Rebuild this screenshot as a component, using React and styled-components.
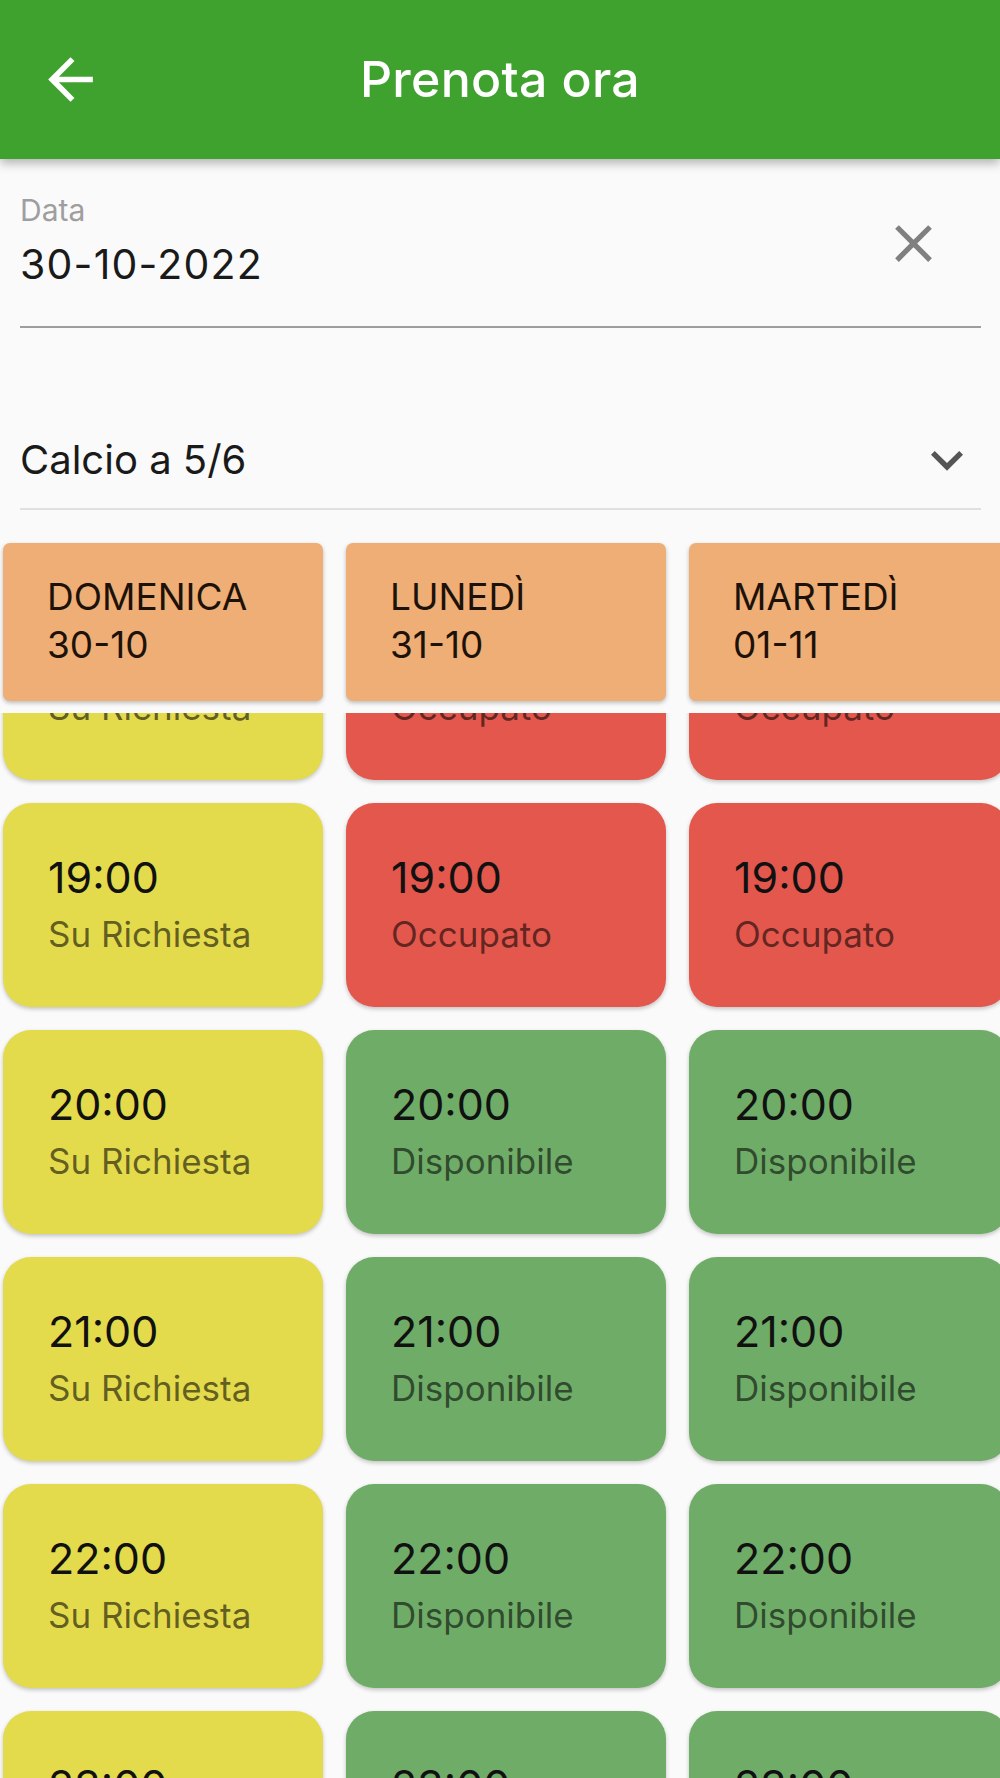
import styled, { createGlobalStyle } from "styled-components";

const days = [
  { name: "DOMENICA", date: "30-10" },
  { name: "LUNEDÌ", date: "31-10" },
  { name: "MARTEDÌ", date: "01-11" },
];

// status per column (domenica, lunedì, martedì)
const slots = [
  { time: "18:00", status: ["request", "busy", "busy"] },
  { time: "19:00", status: ["request", "busy", "busy"] },
  { time: "20:00", status: ["request", "free", "free"] },
  { time: "21:00", status: ["request", "free", "free"] },
  { time: "22:00", status: ["request", "free", "free"] },
  { time: "23:00", status: ["request", "free", "free"] },
];

const statusLabel = {
  request: "Su Richiesta",
  busy: "Occupato",
  free: "Disponibile",
};

const statusColor = {
  request: "#e3da4c",
  busy: "#e3574d",
  free: "#6fac68",
};

const App = () => {
  return (
    <>
      <GlobalStyle />
      <Page>
        <AppBar>
          <BackButton aria-label="indietro">
            <svg width="67" height="67" viewBox="0 0 24 24" fill="#fff">
              <path d="M20 11H7.83l5.59-5.59L12 4l-8 8 8 8 1.41-1.41L7.83 13H20v-2z" />
            </svg>
          </BackButton>
          <Title>Prenota ora</Title>
        </AppBar>

        <DateField>
          <FieldText>
            <FieldLabel>Data</FieldLabel>
            <FieldValue>30-10-2022</FieldValue>
          </FieldText>
          <ClearButton aria-label="cancella">
            <svg width="63" height="63" viewBox="0 0 24 24" fill="#808080">
              <path d="M19 6.41L17.59 5 12 10.59 6.41 5 5 6.41 10.59 12 5 17.59 6.41 19 12 13.41 17.59 19 19 17.59 13.41 12z" />
            </svg>
          </ClearButton>
        </DateField>

        <SportSelect>
          <SelectValue>Calcio a 5/6</SelectValue>
          <svg width="64" height="64" viewBox="0 0 24 24" fill="#555">
            <path d="M16.59 8.59L12 13.17 7.41 8.59 6 10l6 6 6-6z" />
          </svg>
        </SportSelect>

        <DayRow>
          {days.map((d) => (
            <DayCard key={d.name}>
              <div>{d.name}</div>
              <div>{d.date}</div>
            </DayCard>
          ))}
        </DayRow>

        <SlotViewport>
          <SlotGrid>
            {slots.map((row) =>
              row.status.map((s, i) => (
                <SlotCard key={row.time + i} $status={s}>
                  <SlotTime>{row.time}</SlotTime>
                  <SlotStatus>{statusLabel[s]}</SlotStatus>
                </SlotCard>
              ))
            )}
          </SlotGrid>
        </SlotViewport>
      </Page>
    </>
  );
};

export default App;

//Styled components
const GlobalStyle = createGlobalStyle`
  html, body {
    margin: 0;
    padding: 0;
    overflow: hidden;
    background: #fafafa;
  }
  body {
    font-family: Inter, "Noto Sans", sans-serif;
  }
`;

const Page = styled.div`
  height: 100vh;
  display: flex;
  flex-direction: column;
  overflow: hidden;
  background: #fafafa;
`;

const AppBar = styled.header`
  position: relative;
  z-index: 2;
  flex-shrink: 0;
  height: 159px;
  background: #40a22e;
  box-shadow: 0 4px 10px rgba(0, 0, 0, 0.3);
  display: grid;
  grid-template-columns: 1fr auto 1fr;
  align-items: center;
`;

const BackButton = styled.div`
  justify-self: start;
  margin-left: 37px;
  display: flex;
`;

const Title = styled.h1`
  margin: 0 0 2px;
  font-size: 50px;
  font-weight: 500;
  color: #fff;
  letter-spacing: 0.3px;
`;

const DateField = styled.div`
  flex-shrink: 0;
  margin: 37px 19px 0 20px;
  padding-bottom: 41px;
  border-bottom: 2px solid #9e9e9e;
  display: flex;
  align-items: center;
  justify-content: space-between;
`;

const FieldText = styled.div`
  display: flex;
  flex-direction: column;
`;

const FieldLabel = styled.div`
  font-size: 30px;
  line-height: 29px;
  color: #9e9e9e;
`;

const FieldValue = styled.div`
  margin-top: 19px;
  font-size: 41px;
  line-height: 41px;
  letter-spacing: 1.2px;
  color: #1a1a1a;
`;

const ClearButton = styled.div`
  display: flex;
  margin: 6px 36px 0 0;
`;

const SportSelect = styled.div`
  flex-shrink: 0;
  margin: 112px 19px 0 20px;
  height: 40px;
  padding-bottom: 28px;
  border-bottom: 2px solid #e0e0e0;
  display: flex;
  align-items: center;
  justify-content: space-between;

  svg {
    margin-right: 2px;
  }
`;

const SelectValue = styled.div`
  font-size: 40px;
  line-height: 40px;
  color: #1a1a1a;
`;

const DayRow = styled.div`
  flex-shrink: 0;
  margin-top: 33px;
  padding-left: 3px;
  display: grid;
  grid-template-columns: repeat(3, 320px);
  column-gap: 23px;
`;

const DayCard = styled.div`
  box-sizing: border-box;
  height: 158px;
  padding: 30px 0 0 44px;
  background: #eeae76;
  border-radius: 7px;
  box-shadow: 0 2px 4px rgba(0, 0, 0, 0.25);
  font-size: 37px;
  line-height: 48px;
  color: #1d120a;
`;

const SlotViewport = styled.div`
  flex: 1;
  margin-top: 12px;
  overflow: hidden;
`;

const SlotGrid = styled.div`
  margin-top: -137px;
  padding: 0 0 10px 3px;
  display: grid;
  grid-template-columns: repeat(3, 320px);
  gap: 23px;
`;

const SlotCard = styled.div`
  box-sizing: border-box;
  height: 204px;
  padding: 53px 0 0 45px;
  border-radius: 28px;
  background: ${(p) => statusColor[p.$status]};
  box-shadow: 0 2px 4px rgba(0, 0, 0, 0.22);
`;

const SlotTime = styled.div`
  font-size: 43px;
  line-height: 43px;
  color: #111;
`;

const SlotStatus = styled.div`
  margin-top: 17px;
  font-size: 35px;
  line-height: 36px;
  color: rgba(0, 0, 0, 0.58);
`;
